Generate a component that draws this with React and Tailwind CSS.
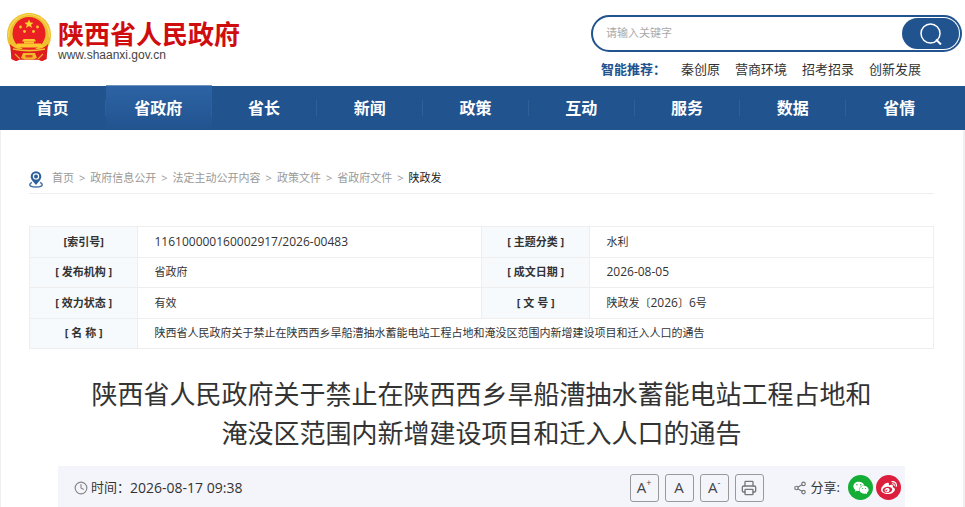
import { useState } from "react";
import { Clock, Printer, Share2 } from "lucide-react";
import { FaWeibo, FaWeixin } from "react-icons/fa";

const navItems = ["首页", "省政府", "省长", "新闻", "政策", "互动", "服务", "数据", "省情"];
const hotWords = ["秦创原", "营商环境", "招考招录", "创新发展"];
const crumbs = ["首页", "政府信息公开", "法定主动公开内容", "政策文件", "省政府文件"];

const Emblem = () => (
  <svg viewBox="0 0 44 48" className="h-12 w-11 shrink-0" aria-hidden="true">
    <path d="M5 34 L4.500 46 L9 48 L13 46.500 L31 46.500 L35 48 L39.500 46 L39 34 Z" fill="#df1c1e" />
    <path d="M22 0 C34 0 44 9.500 44 22 C44 30 41 35 37 38 L7 38 C3 35 0 30 0 22 C0 9.500 10 0 22 0Z" fill="#efc02f" />
    <path d="M1.500 24 C1.500 11 11 1.500 22 1.500 S42.500 11 42.500 24" fill="none" stroke="#f8da5e" strokeWidth="1.2" />
    <ellipse cx="22" cy="20.5" rx="16.500" ry="16.500" fill="#ea1f23" />
    <path d="M22 6.500 l1.300 3 3.200.2-2.400 2 .9 3.200-3-1.800-3 1.800.9-3.200-2.400-2 3.200-.2z" fill="#fbd431" />
    <g fill="#fbc92f">
      <circle cx="13.5" cy="14" r="1.4" />
      <circle cx="30.5" cy="14" r="1.4" />
      <circle cx="17.5" cy="18.5" r="1.4" />
      <circle cx="26.5" cy="18.5" r="1.4" />
      <path d="M16.500 26h11l1.500 2.500H15z" />
      <path d="M17 28.500h10v2H17z" />
      <path d="M10 30.500h24l2 4H8z" />
    </g>
    <path d="M3 31 C8 36 12 36 14 36 L30 36 C32 36 36 36 41 31 L39.500 46 L35 48 L31 46.500 L13 46.500 L9 48 L4.500 46 Z" fill="#df1c1e" />
    <path d="M6 36 C16 38 28 38 38 36" fill="none" stroke="#f3c32e" strokeWidth="1.6" />
    <path d="M14 45 L16 40 H28 L30 45 L26 46.500 H18 Z" fill="#f3b72c" />
    <path d="M18.500 42h7v2.500h-7z" fill="#e4451f" />
    <path d="M8 41 L13 46 M36 41 L31 46" stroke="#f0a92c" strokeWidth="1.2" />
  </svg>
);

const SearchIcon = () => (
  <svg viewBox="0 0 22 22" className="h-[22px] w-[22px]" fill="none" stroke="currentColor" strokeWidth="1.5" aria-hidden="true">
    <circle cx="10.5" cy="10.5" r="9.5" />
    <path d="M16 16.500 L21 21.500" strokeWidth="2" />
  </svg>
);

const PinIcon = () => (
  <svg viewBox="0 0 14 17" className="h-[17px] w-[14px] shrink-0" aria-hidden="true">
    <path d="M3 11.500 C1.500 12 .8 12.800 .8 13.500 C.8 15 3.600 16 7 16 S13.200 15 13.200 13.500 C13.200 12.800 12.500 12 11 11.500" fill="none" stroke="#4672a8" strokeWidth="1.5" />
    <path d="M7 .2 A5.300 5.300 0 0 0 1.700 5.500 C1.700 8.600 5 11.500 7 14 C9 11.500 12.300 8.600 12.300 5.500 A5.300 5.300 0 0 0 7 .2Z" fill="#2f5f9a" />
    <circle cx="7" cy="5.4" r="2.6" fill="none" stroke="#fff" strokeWidth="1.2" />
  </svg>
);

const Header = () => {
  const [keyword, setKeyword] = useState("");

  return (
    <header className="flex items-start justify-between pl-[7px] pr-[3px]">
      <a href="#" className="mt-[13px] flex items-end gap-[7px]">
        <Emblem />
        <span className="flex flex-col">
          <span className="text-[26px] leading-[30px] font-bold text-[#cf0d0f]">陕西省人民政府</span>
          <span className="font-['Liberation_Sans'] text-xs leading-3 text-[#444]">www.shaanxi.gov.cn</span>
        </span>
      </a>
      <div className="mt-[15px] w-[371px]">
        <form
          onSubmit={(e) => e.preventDefault()}
          className="flex h-[37px] items-center rounded-full border-2 border-[#21538f] pl-[13px]"
        >
          <input
            type="text"
            aria-label="请输入关键字"
            placeholder="请输入关键字"
            value={keyword}
            onChange={(e) => setKeyword(e.target.value)}
            className="min-w-0 flex-1 text-[11px] outline-none placeholder:text-[#aaa]"
          />
          <button type="submit" aria-label="搜索" className="mr-px flex h-[31px] w-[57px] items-center justify-center rounded-full bg-[#21538f] text-white">
            <SearchIcon />
          </button>
        </form>
        <div className="mt-[7px] flex items-center gap-[15px] pl-[10px] text-[13px] leading-5 text-[#333]">
          <strong className="text-[#21538f]">智能推荐：</strong>
          {hotWords.map((word) => (
            <a key={word} href="#">{word}</a>
          ))}
        </div>
      </div>
    </header>
  );
};

const Navbar = () => (
  <nav className="mt-[7px] flex h-11 items-end bg-[#21538f] pr-[13px]">
    {navItems.map((item) => (
      <a
        key={item}
        href="#"
        className={
          item === "省政府"
            ? "flex h-[45px] flex-1 items-center justify-center border-t border-[#6f93bf] bg-linear-to-b from-[#2d63a5] to-[#21538f] text-base font-bold text-white"
            : "flex h-11 flex-1 items-center justify-center text-base font-bold text-white"
        }
      >
        <span className="flex-1 text-center">{item}</span>
        {item !== "省情" && <span className="h-4 w-px bg-[#315f98]" />}
      </a>
    ))}
  </nav>
);

const Label = ({ children }) => (
  <th scope="row" className="border border-[#eee] bg-[#f6fafd] text-center font-bold">{children}</th>
);

const Value = ({ children, span }) => (
  <td colSpan={span} className="border border-[#eee] px-4">{children}</td>
);

const InfoTable = () => (
  <table className="mt-8 h-[123px] w-full table-fixed border-collapse text-[11px] leading-4 text-[#333]">
    <colgroup>
      <col className="w-[12%]" />
      <col className="w-[38%]" />
      <col className="w-[12%]" />
      <col className="w-[38%]" />
    </colgroup>
    <tbody>
      <tr>
        <Label>[索引号]</Label>
        <Value><span className="text-xs">116100000160002917/2026-00483</span></Value>
        <Label>[ 主题分类 ]</Label>
        <Value>水利</Value>
      </tr>
      <tr>
        <Label>[ 发布机构 ]</Label>
        <Value>省政府</Value>
        <Label>[ 成文日期 ]</Label>
        <Value><span className="text-xs">2026-08-05</span></Value>
      </tr>
      <tr>
        <Label>[ 效力状态 ]</Label>
        <Value>有效</Value>
        <Label>[ 文 号 ]</Label>
        <Value>陕政发〔<span className="text-xs">2026</span>〕<span className="text-xs">6</span>号</Value>
      </tr>
      <tr>
        <Label>[ 名 称 ]</Label>
        <Value span={3}>陕西省人民政府关于禁止在陕西西乡旱船漕抽水蓄能电站工程占地和淹没区范围内新增建设项目和迁入人口的通告</Value>
      </tr>
    </tbody>
  </table>
);

const ToolButton = ({ label, children }) => (
  <button type="button" aria-label={label} className="flex h-7 w-[29px] items-center justify-center rounded-[3px] border border-[#999] text-[15px] font-medium text-[#444]">
    {children}
  </button>
);

const MetaBar = () => (
  <div className="mx-[29px] mt-[13px] flex h-[43px] items-center justify-between bg-[#f4f5fb] pr-1 pl-4 text-[13px] text-[#333]">
    <div className="flex items-center">
      <Clock className="mr-[3px] h-[14px] w-[14px] text-[#888]" strokeWidth={2} />
      <span>时间：</span>
      <time className="text-sm">2026-08-17 09:38</time>
    </div>
    <div className="flex items-center">
      <div className="flex gap-[6px]">
        <ToolButton label="放大字体">A<sup className="text-[9px]">+</sup></ToolButton>
        <ToolButton label="默认字体">A</ToolButton>
        <ToolButton label="缩小字体">A<sup className="text-[9px]">-</sup></ToolButton>
        <ToolButton label="打印"><Printer className="h-4 w-4 text-[#777]" strokeWidth={2} /></ToolButton>
      </div>
      <Share2 className="mr-1 ml-[29px] h-[14px] w-[14px] text-[#777]" strokeWidth={2} />
      <span>分享:</span>
      <a href="#" aria-label="微信" className="ml-2 flex h-[25px] w-[25px] items-center justify-center rounded-full bg-[#14ad36] text-white">
        <FaWeixin className="h-4 w-4" />
      </a>
      <a href="#" aria-label="微博" className="ml-[3px] flex h-[25px] w-[25px] items-center justify-center rounded-full bg-[#dc1f3c] text-white">
        <FaWeibo className="h-4 w-4" />
      </a>
    </div>
  </div>
);

const App = () => {
  return (
    <div className="min-h-screen bg-white font-['Open_Sans','Noto_Sans_CJK_SC',sans-serif]">
      <Header />
      <Navbar />
      <main className="min-h-[377px] border-r-2 border-l border-[#f0f0f0] pr-[29px] pl-7">
        <div className="flex h-16 items-end border-b border-[#eee] pb-[5px] text-[11px] leading-5 text-[#999]">
          <PinIcon />
          <div className="ml-[9px] flex gap-[5px]">
            {crumbs.map((crumb) => (
              <span key={crumb} className="flex gap-[5px]">
                <a href="#">{crumb}</a>
                <span>&gt;</span>
              </span>
            ))}
            <a href="#" className="text-[#222]">陕政发</a>
          </div>
        </div>
        <InfoTable />
        <h1 className="mt-[26px] text-center text-[26px] leading-[39px] text-[#333]">
          陕西省人民政府关于禁止在陕西西乡旱船漕抽水蓄能电站工程占地和
          <br />
          淹没区范围内新增建设项目和迁入人口的通告
        </h1>
        <MetaBar />
      </main>
    </div>
  );
};

export default App;
